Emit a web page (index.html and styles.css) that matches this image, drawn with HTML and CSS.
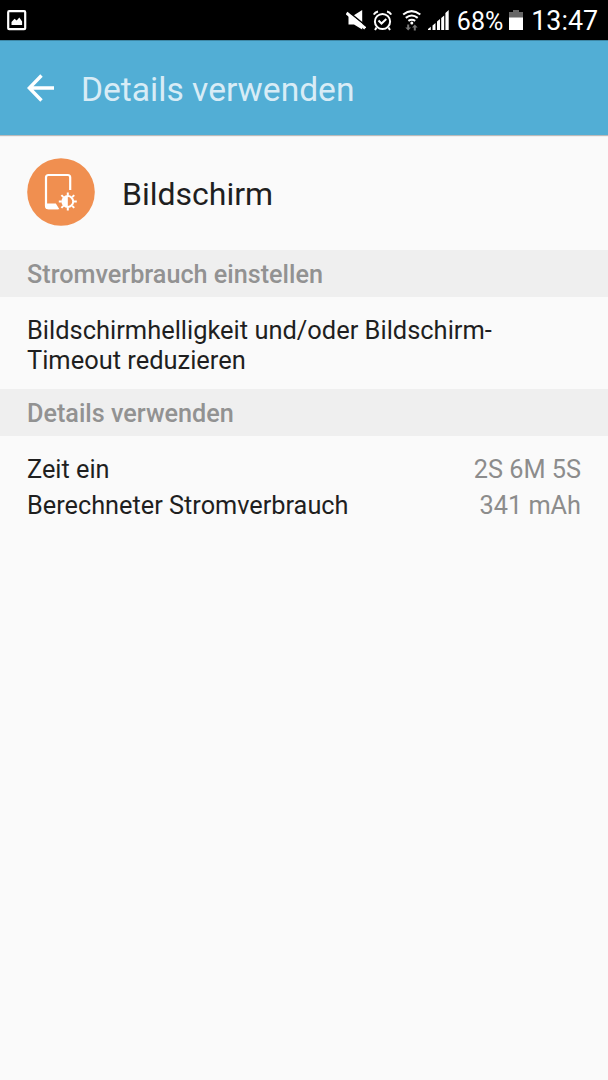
FILE: index.html
```
<!DOCTYPE html>
<html lang="de">
<head>
    <meta charset="UTF-8">
    <meta name="viewport" content="width=device-width, initial-scale=1.0">
    <title>Details verwenden</title>
    <link rel="stylesheet" href="styles.css">
</head>
<body>
    <div class="status-bar">
        <svg class="icon-picture" width="20" height="21" viewBox="0 0 20 21">
            <rect x="1.2" y="1.2" width="17" height="18" rx="1" fill="none" stroke="#fff" stroke-width="2.2"/>
            <path d="M4.5 15v-3l3-3.2 2.2 1.8 2.6-3 2.8 4V15z" fill="#fff"/>
        </svg>
        <div class="status-icons">
            <svg class="icon-mute" width="20" height="20" viewBox="0 0 20 20">
                <path d="M2.500 5.500h5L16.200 0v19.600L8 14.500H2.500z" fill="#fff"/>
                <path d="M1.500 .8L20 16" stroke="#000" stroke-width="1.600"/>
                <path d="M.5 3L19.200 18.300" stroke="#fff" stroke-width="3"/>
            </svg>
            <svg class="icon-alarm" width="19" height="21" viewBox="0 0 19 21">
                <g fill="none" stroke="#fff">
                    <circle cx="9.500" cy="11.500" r="7.600" stroke-width="2"/>
                    <path d="M.8 4.600Q2 2 5 1.400M18.200 4.600Q17 2 14 1.400M3.500 17.500L2 20M15.500 17.500l1.500 2.500" stroke-width="2"/>
                    <path d="M5.500 10.500l3 3 4.800-4.500" stroke-width="2"/>
                </g>
            </svg>
            <svg class="icon-wifi" width="20" height="21" viewBox="0 0 20 21">
                <g fill="none" stroke="#fff" stroke-width="2.100">
                    <path d="M1.200 4.500q8.300-6.600 17.100 0"/>
                    <path d="M3.800 7.800q5.900-4.600 11.900 0"/>
                    <path d="M6.400 10.900q3.400-2.400 6.800 0"/>
                </g>
                <circle cx="9.800" cy="13" r="1.500" fill="#fff"/>
                <path d="M5.200 14.500h2v3H9L6.200 20.500 3.300 17.500h1.900zM11.800 20.500h2v-3h1.800L12.800 14.500 10 17.500h1.800z" fill="#777"/>
            </svg>
            <svg class="icon-signal" width="21" height="20" viewBox="0 0 21 20">
                <path d="M0 20v-1l2.800-2.200V20zM4.500 20v-4.500L7.500 13v7zM9 20v-8.500L12 9v11zM13.200 20V8l3-2.500V20zM17.400 20V3L20.700 0v20z" fill="#fff"/>
            </svg>
            <span class="battery-level">68%</span>
            <svg class="icon-battery" width="14" height="20" viewBox="0 0 14 20">
                <path d="M0 2h4V0h6v2h4v6H0z" fill="#666"/>
                <path d="M0 7.500h14V20H0z" fill="#fff"/>
            </svg>
            <span class="clock">13:47</span>
        </div>
    </div>

    <header class="app-bar">
        <svg class="icon-back" width="27" height="28" viewBox="0 0 27 28">
            <path d="M14.500 1.500L2.300 14l12.200 12.500M2 14h25" fill="none" stroke="#fff" stroke-width="3.400"/>
        </svg>
        <h1 class="app-title">Details verwenden</h1>
    </header>

    <main>
        <div class="item-header">
            <svg class="item-icon" width="68" height="68" viewBox="0 0 68 68">
                <circle cx="34" cy="34" r="33.800" fill="#f08f50"/>
                <path d="M43.200 32V19.500q0-2.500-2.500-2.500H21.500Q19 17 19 19.500v28.200q0 2.500 2.500 2.500H31" fill="none" stroke="#fff" stroke-width="2.200"/>
                <path d="M18.500 45.500h10.300l3.600 5.800H21q-2.500 0-2.500-2.500z" fill="#fff"/>
                <!-- brightness sun -->
                <g fill="none" stroke="#fff">
                    <circle cx="40.800" cy="43.500" r="5.400" stroke-width="2"/>
                    <path d="M40.800 34.500v3M40.800 49.500v3M31.800 43.500h3M46.800 43.500h3M34.400 37.100l2 2M45.200 47.900l2 2M34.400 49.900l2-2M45.200 39.100l2-2" stroke-width="2"/>
                </g>
                <path d="M40.800 38.500a5 5 0 0 0 0 10z" fill="#fff"/>
            </svg>
            <h2 class="item-name">Bildschirm</h2>
        </div>

        <h3 class="section-title">Stromverbrauch einstellen</h3>
        <p class="hint">Bildschirmhelligkeit und/oder Bildschirm-Timeout reduzieren</p>

        <h3 class="section-title">Details verwenden</h3>
        <div class="details">
            <div class="detail-row">
                <span>Zeit ein</span>
                <span class="detail-value">2S 6M 5S</span>
            </div>
            <div class="detail-row">
                <span>Berechneter Stromverbrauch</span>
                <span class="detail-value">341 mAh</span>
            </div>
        </div>
    </main>
</body>
</html>
```
FILE: styles.css
```
* {
    box-sizing: border-box;
}

body {
    margin: 0;
    min-height: 100vh;
    background-color: #fafafa;
    color: #1f1f1f;
    font-family: Roboto, sans-serif;
    font-size: 25.4px;
    line-height: 30px;
}

h1, h2, h3, p {
    margin: 0;
    font-weight: 400;
}

svg {
    display: block;
    flex: none;
}

.status-bar {
    display: flex;
    justify-content: space-between;
    height: 40px;
    padding: 0 10px 0 7px;
    background-color: #000;
    color: #fff;
}

.icon-picture {
    margin-top: 10px;
}

.status-icons {
    display: flex;
    align-items: center;
    height: 40px;
}

.icon-alarm {
    margin-left: 7px;
}

.icon-wifi {
    margin-left: 10px;
}

.icon-signal {
    margin-left: 6px;
}

.battery-level {
    margin-left: 8px;
    padding-top: 3px;
    font-size: 25px;
}

.icon-battery {
    margin-left: 6px;
}

.clock {
    margin-left: 8px;
    padding-top: 2px;
    font-size: 26.8px;
}

.app-bar {
    display: flex;
    align-items: center;
    height: 95px;
    padding-left: 27px;
    border-top: 1px solid #3d87a5;
    background-color: #52aed5;
    box-shadow: 0 1px 1px rgba(0, 0, 0, 0.25);
}

.app-title {
    margin-left: 27px;
    padding-top: 4px;
    color: #d8ecf6;
    font-size: 33.6px;
    line-height: 40px;
}

.item-header {
    display: flex;
    align-items: center;
    height: 115px;
    padding: 0 27px 1px;
}

.item-name {
    margin-left: 27px;
    padding-top: 3px;
    font-size: 32px;
    line-height: 38px;
}

.section-title {
    height: 47px;
    padding: 10px 27px 0;
    background-color: #efefef;
    color: #929292;
    font-size: 25.2px;
    font-weight: 500;
}

.hint {
    height: 92px;
    padding: 18px 27px 0;
    font-size: 25.45px;
}

.details {
    padding: 19px 27px 0;
    font-size: 25.3px;
}

.detail-row {
    display: flex;
    justify-content: space-between;
    height: 36px;
}

.detail-value {
    color: #8c8c8c;
}
```
